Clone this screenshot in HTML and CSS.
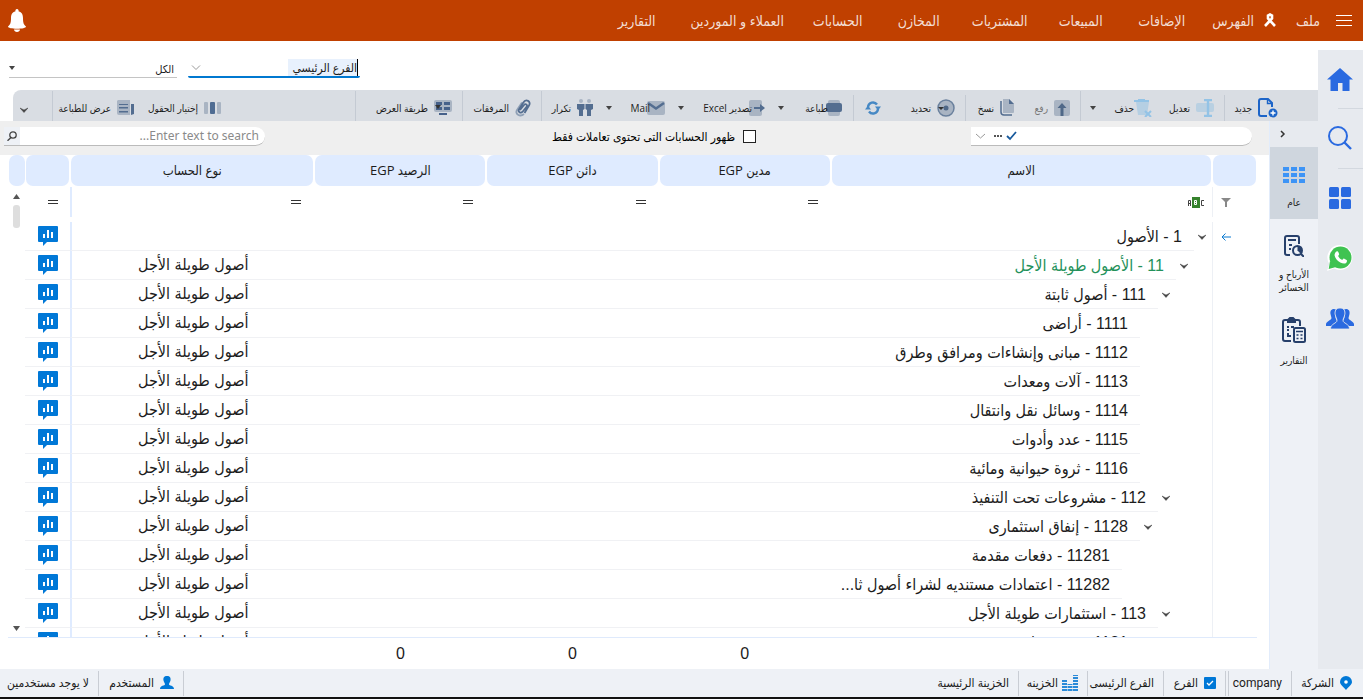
FILE: index.html
```html
<!DOCTYPE html>
<html lang="ar" dir="rtl">
<head>
<meta charset="utf-8">
<meta name="viewport" content="width=device-width, initial-scale=1">
<title>دليل الحسابات</title>
<link rel="stylesheet" href="styles.css">
</head>
<body>
<svg class="defs" aria-hidden="true">
  <symbol id="chart" viewBox="0 0 20 20"><path fill="#0078d7" d="M1 0h18a1 1 0 0 1 1 1v14a1 1 0 0 1-1 1H9l-4 4v-4H1a1 1 0 0 1-1-1V1a1 1 0 0 1 1-1z"/><path fill="#fff" d="M5 8h2v4H5zM9 4h2v8H9zM13 6h2v6h-2z"/></symbol>
  <symbol id="down" viewBox="0 0 8 6"><path d="M0 1l4 2 4-2-4 4.500z" fill="#444" stroke="#444" stroke-width=".5"/></symbol>
  <symbol id="tri" viewBox="0 0 6 4"><path fill="#444" d="M0 0h6L3 4z"/></symbol>
  <symbol id="eq" viewBox="0 0 10 4"><path fill="#333" d="M0 0h10v1H0zM0 3h10v1H0z"/></symbol>
  <symbol id="thin" viewBox="0 0 10 6"><path d="M1 .5l4 4 4-4" fill="none" stroke="#999"/></symbol>
</svg>

<header class="top">
  <nav class="menu">
    <button class="burger" aria-label="القائمة"><svg width="16" height="12"><path fill="#fff" d="M0 0h16v1H0zM0 5h16v1H0zM0 10h16v1H0z"/></svg></button>
    <a class="file" href="#">ملف</a>
    <a class="index" href="#"><svg width="12" height="15" viewBox="0 0 12 15"><path d="M1 13L8 5.500V2.500L6 1.500 4 2.500v3L11 13" fill="none" stroke="#fff" stroke-width="2.600"/></svg>الفهرس</a>
    <a href="#">الإضافات</a>
    <a href="#">المبيعات</a>
    <a href="#">المشتريات</a>
    <a href="#">المخازن</a>
    <a href="#">الحسابات</a>
    <a class="wide" href="#">العملاء و الموردين</a>
    <a href="#">التقارير</a>
  </nav>
  <button class="bell" aria-label="التنبيهات"><svg width="18" height="24" viewBox="0 0 18 24"><path fill="#fff" d="M9 0a1.600 1.600 0 0 1 1.500 2.200C14 3 15 6 15 9c0 5 .7 6.500 3 8.500 0 1.500-4 2.200-9 2.200S0 19 0 17.500C2.300 15.500 3 14 3 9c0-3 1-6 4.500-6.800A1.600 1.600 0 0 1 9 0zM6 20.500h6c0 1.500-1.500 2.500-3 2.500s-3-1-3-2.500z"/></svg></button>
</header>

<div class="body">
  <aside class="rail">
    <a href="#" class="home" aria-label="الرئيسية"><svg width="26" height="23" viewBox="0 0 26 23"><path fill="#2a6ae0" d="M13 0l13 11.500h-3.500V23h-7v-8h-4.500v8h-7.500V11.500H0z"/></svg></a>
    <a href="#" class="ruled" aria-label="بحث"><svg width="24" height="24" viewBox="0 0 24 24" fill="none" stroke="#2a6ae0" stroke-width="2"><circle cx="10" cy="10" r="9"/><path d="M16 16l7 7" stroke-width="2.400"/></svg></a>
    <a href="#" class="ruled" aria-label="التطبيقات"><svg width="22" height="22" fill="#2a6ae0"><rect width="10" height="10" rx="1.500"/><rect x="12" width="10" height="10" rx="1.500"/><rect y="12" width="10" height="10" rx="1.500"/><rect x="12" y="12" width="10" height="10" rx="1.500"/></svg></a>
    <a href="#" aria-label="واتساب"><svg width="26" height="26" viewBox="0 0 26 26"><path fill="#fff" d="M13.500 0A12.500 12.500 0 1 1 7 23.500L0 26l2.300-7A12.500 12.500 0 0 1 13.500 0z"/><circle cx="13.500" cy="12.500" r="11" fill="#3fc351"/><path fill="#3fc351" d="M3 16l-1.300 8 7.300-2z"/><path fill="#fff" d="M9.500 6.500c.8-.6 1.500-.3 1.900.8l.7 1.700c.2.800-.3 1.200-1 2 1 2 2.300 3.200 4.200 4 .8-1 1.200-1.600 2-1.300l2.300 1.200c.8.500.4 2-.3 2.800-1.300 1.300-3.600 1-6-.3-3.300-1.800-5.300-4.700-5.700-7-.2-1.600.8-3.200 1.900-3.900z"/></svg></a>
    <a href="#" aria-label="المستخدمون"><svg width="28" height="21" viewBox="0 0 28 21"><path fill="#2a6ae0" d="M8 1c-3 0-4 2.500-3.500 5l1 4c0 2-5 3.500-5.500 6v2h6c.7-3 5-3 5-5C9 10 8 4 10 1.500zM20 1c3 0 4 2.500 3.500 5l-1 4c0 2 5 3.500 5.500 6v2h-6c-.7-3-5-3-5-5 2-3 3-9 1-11.500z"/><path fill="#2a6ae0" stroke="#e7eaef" stroke-width=".8" d="M14 0c4 0 5.500 3 4.800 6.500-.4 2.500-1.800 4-1.800 6 0 3 6.500 3 6.500 8.500h-19c0-5.500 6.500-5.500 6.500-8.500 0-2-1.400-3.500-1.800-6C8.500 3 10 0 14 0z"/></svg></a>
  </aside>

  <div class="work">
    <div class="filters">
      <label class="pick branch"><input type="text" value="الفرع الرئيسي" aria-label="الفرع"><svg width="10" height="6"><use href="#thin"/></svg></label>
      <label class="pick all"><input type="text" value="الكل" aria-label="النطاق"><svg width="6" height="4"><use href="#tri"/></svg></label>
    </div>

    <div class="tools">
      <button class="t-new"><svg width="20" height="20" viewBox="0 0 20 20" fill="none" stroke="#1c64c8" stroke-width="2"><path d="M9 18H3a2 2 0 0 1-2-2V3a2 2 0 0 1 2-2h7l4 4v4"/><path d="M9.500 1v4.500H14" stroke-width="1.400"/><circle cx="15" cy="15" r="4.500" fill="#1c64c8" stroke="none"/><path d="M15 12.500v5M12.500 15h5" stroke="#fff" stroke-width="1.400"/></svg>جديد</button>
      <i class="bar low"></i>
      <button class="t-edit"><svg width="18" height="18" viewBox="0 0 18 18"><rect y="4" width="18" height="9" rx="2" fill="#b9d0e2"/><path d="M8 1h8M8 17h8M12 1v16" stroke="#93c3e6" stroke-width="2.400"/></svg>تعديل</button>
      <button class="t-del"><svg width="18" height="18" viewBox="0 0 18 18"><path fill="#b5cfe3" d="M2 3h13l-2 13H4z"/><path d="M0 2h15M4 1h7" stroke="#93c3e6" stroke-width="2"/><path d="M11 12l6 6M17 12l-6 6" stroke="#93c3e6" stroke-width="2"/></svg>حذف</button>
      <button class="drop" aria-label="خيارات الحذف"><svg width="6" height="4"><use href="#tri"/></svg></button>
      <i class="bar"></i>
      <button class="t-up" disabled><svg width="16" height="16" viewBox="0 0 16 16"><rect width="16" height="16" rx="2" fill="#a9b4c3"/><path fill="#4f6888" d="M8 3l4.500 5H9.500v8h-3V8h-3z"/></svg>رفع</button>
      <button class="t-copy"><svg width="14" height="17" viewBox="0 0 14 17"><path fill="#a9b4c3" d="M3 0h6l5 5v8a1 1 0 0 1-1 1H3z"/><path fill="#536d90" d="M9 0l5 5H9z"/><path d="M1 2v11a3 3 0 0 0 3 3h8" fill="none" stroke="#536d90" stroke-width="1.500"/></svg>نسخ</button>
      <i class="bar low"></i>
      <button class="t-pick"><svg width="18" height="18" viewBox="0 0 18 18"><circle cx="9" cy="9" r="8" fill="#a9b4c3" stroke="#6a809d" stroke-width="1.500"/><circle cx="9" cy="9" r="2.500" fill="#4f6888"/><path fill="#333" d="M1 8h6L4 11z"/></svg>تحديد</button>
      <button class="t-refresh" aria-label="تحديث"><svg width="16" height="14" viewBox="0 0 16 14"><path d="M3 6a5 5 0 0 1 9-2.500M13 8a5 5 0 0 1-9 2.500" fill="none" stroke="#4688c4" stroke-width="2.400"/><path fill="#4688c4" d="M10 5.500h6l-3 4zM6 8.500H0l3-4z"/></svg></button>
      <i class="bar low"></i>
      <button class="t-print"><svg width="18" height="16" viewBox="0 0 18 16"><rect x="3" width="12" height="16" rx="2" fill="#a9b4c3"/><rect x="1" y="3" width="16" height="9" rx="2" fill="#536d90"/></svg>طباعة</button>
      <button class="drop" aria-label="خيارات الطباعة"><svg width="6" height="4"><use href="#tri"/></svg></button>
      <button class="t-excel"><svg width="16" height="16" viewBox="0 0 16 16"><rect width="13" height="16" rx="2" fill="#a9b4c3"/><path fill="#536d90" d="M5 7h6V4l5 4-5 4V9H5z"/></svg>تصدير Excel</button>
      <button class="drop" aria-label="خيارات التصدير"><svg width="6" height="4"><use href="#tri"/></svg></button>
      <button class="t-mail"><svg width="18" height="14" viewBox="0 0 18 14"><rect width="18" height="14" rx="2" fill="#a9b4c3"/><path d="M1 2l8 5.500L17 2" fill="none" stroke="#536d90" stroke-width="2.500"/></svg>Mail</button>
      <button class="drop" aria-label="خيارات البريد"><svg width="6" height="4"><use href="#tri"/></svg></button>
      <button class="t-dup"><svg width="16" height="17" viewBox="0 0 16 17"><circle cx="4" cy="2" r="2" fill="#a9b4c3"/><circle cx="12" cy="2" r="2" fill="#a9b4c3"/><path fill="#536d90" d="M0 5h7.500v5L6 11v6H2v-6l-2-1zM8.500 5H16v5l-2 1v6h-4v-6l-1.500-1z"/></svg>تكرار</button>
      <i class="bar"></i>
      <button class="t-att"><svg width="16" height="18" viewBox="0 0 16 18" fill="none" stroke-width="1.800"><path d="M9 15c-4 3.500-9.500 0-7-4l5-7.500" stroke="#8fa0b6"/><path d="M5 11l4-5c1.500-2 4 0 2.600 1.700l-4 5c-2 2-5 0-3.500-2.500L8 4c3-5 8.500-1.500 6 2.500L9.500 14" stroke="#536d90"/></svg>المرفقات</button>
      <i class="bar"></i>
      <button class="t-view"><svg width="18" height="15" viewBox="0 0 18 15"><rect width="18" height="12" rx="2" fill="#a9b4c3"/><path fill="#46618a" d="M2 2h6v3H2zM10 2h6v3h-6zM2 7h6v3H2zM10 7h6v3h-6zM5 13h8v2H5z"/><path fill="#333" d="M1 5h6L4 9z"/></svg>طريقة العرض</button>
      <i class="bar"></i>
      <span class="grow"></span>
      <button class="t-cols"><svg width="18" height="12" viewBox="0 0 18 12"><rect width="4" height="12" rx="1" fill="#a9b4c3"/><rect x="6" width="5" height="12" rx="1" fill="#4f6c93"/><rect x="13" width="4" height="12" rx="1" fill="#a9b4c3"/></svg>إختيار الحقول</button>
      <button class="t-pv"><svg width="17" height="15" viewBox="0 0 17 15"><path fill="#a9b4c3" d="M1 0h12v15H2a2 2 0 0 1-2-2V1z"/><path fill="#536d90" d="M2 4h9v1H2zM2 7h9v1.500H2zM2 11h9v1.500H2zM14 4h3v10l-3 1z"/></svg>عرض للطباعة</button>
      <i class="bar"></i>
      <button class="t-more" aria-label="المزيد"><svg width="8" height="6"><use href="#down"/></svg></button>
    </div>

    <div class="split">
      <aside class="side">
        <button class="fold" aria-label="طي"><svg width="6" height="8"><path d="M1 1l3 3-3 3" fill="none" stroke="#333" stroke-width="1.500"/></svg></button>
        <a class="on" href="#"><svg width="22" height="16" viewBox="0 0 22 16" fill="#3d94f6"><path d="M0 0h6v4H0zM8 0h6v4H8zM16 0h6v4h-6zM0 6h6v4H0zM8 6h6v4H8zM16 6h6v4h-6zM0 12h6v4H0zM8 12h6v4H8zM16 12h6v4h-6z"/></svg>عام</a>
        <a href="#"><svg width="20" height="22" viewBox="0 0 20 22" fill="none" stroke="#27406b" stroke-width="2"><path d="M6 20H3a2 2 0 0 1-2-2V3a2 2 0 0 1 2-2h10a2 2 0 0 1 2 2v6M4 5h8M5 10h3M5 14h2M17 19l3 3"/><circle cx="13.500" cy="15.500" r="4.500"/><path fill="#27406b" stroke="none" d="M13.500 15.500V11a4.500 4.500 0 0 1 4.500 4.500 4.500 4.500 0 0 1-1.500 3z"/></svg>الأرباح و الخسائر</a>
        <a href="#"><svg width="24" height="26" viewBox="0 0 24 26" fill="none" stroke="#27406b" stroke-width="2"><path d="M9 24H3a2 2 0 0 1-2-2V5a2 2 0 0 1 2-2h13a2 2 0 0 1 2 2v4"/><path d="M6 5V3l2-2h3l2 2v2z"/><path d="M5 10h2M9 10h3M5 13h2M6 16v3h3"/><rect x="12" y="11" width="11" height="14" rx="1.500"/><path d="M14 14.500h7M14.500 18h2M18.500 18h2M14.500 21.500h2M18.500 21.500h2" stroke-width="1.600"/></svg>التقارير</a>
      </aside>

      <main class="pane">
        <div class="seek">
          <div class="combo"><input type="text" aria-label="الحساب"><svg width="42" height="10" viewBox="0 0 42 10"><path d="M32 5l3 3 6-7" fill="none" stroke="#17599c" stroke-width="1.800"/><path fill="#555" d="M19 4h2v2h-2zM22 4h2v2h-2zM25 4h2v2h-2z"/><path d="M1 3l4.500 4L10 3" fill="none" stroke="#999"/></svg></div>
          <label class="tick"><input type="checkbox">ظهور الحسابات التى تحتوى تعاملات فقط</label>
          <div class="find"><input type="search" placeholder="Enter text to search..." aria-label="بحث"><button aria-label="ابحث"><svg width="10" height="10" viewBox="0 0 10 10" fill="none" stroke="#444" stroke-width="1.300"><circle cx="6" cy="4" r="3.200"/><path d="M4 6.500L.5 9.800"/></svg></button></div>
        </div>

        <div class="grid">
          <table class="accounts">
            <colgroup><col class="c-mark"><col class="c-name"><col class="c-num"><col class="c-num"><col class="c-num"><col class="c-type"><col class="c-mark"></colgroup>
            <thead>
              <tr class="heads"><th><span></span></th><th><span>الاسم</span></th><th><span>مدين EGP</span></th><th><span>دائن EGP</span></th><th><span>الرصيد EGP</span></th><th><span>نوع الحساب</span></th><th><span></span></th></tr>
              <tr class="ops">
                <td class="mark"><svg width="10" height="9"><path fill="#888" d="M0 0h10L6 4v5H4V4z"/></svg></td>
                <td><svg width="16" height="11" viewBox="0 0 16 11" fill="none" stroke="#444"><path d="M.5 9V3.500h2V9M.5 6.500h2M16 3.500h-2.500v5H16"/><rect x="4" width="8" height="11" fill="#35822c" stroke="none"/><path d="M6.500 3.500h2v2h-2zM6.500 5.500h2v2h-2z" stroke="#fff"/></svg></td>
                <td><svg width="10" height="4"><use href="#eq"/></svg></td><td><svg width="10" height="4"><use href="#eq"/></svg></td><td><svg width="10" height="4"><use href="#eq"/></svg></td><td class="kind"><svg width="10" height="4"><use href="#eq"/></svg></td>
                <td class="flag"><svg width="10" height="4"><use href="#eq"/></svg></td>
              </tr>
            </thead>
            <tbody>
              <tr><td class="mark"><svg width="10" height="8"><path d="M10 4H1M4.500.5L1 4l3.500 3.500" fill="none" stroke="#0a7ad1"/></svg></td><td><div class="node l0"><svg width="8" height="6"><use href="#down"/></svg><span>1 - الأصول</span></div></td><td></td><td></td><td></td><td class="kind"></td><td class="flag"><svg width="20" height="20"><use href="#chart"/></svg></td></tr>
              <tr class="green"><td class="mark"></td><td><div class="node l1"><svg width="8" height="6"><use href="#down"/></svg><span>11 - الأصول طويلة الأجل</span></div></td><td></td><td></td><td></td><td class="kind">أصول طويلة الأجل</td><td class="flag"><svg width="20" height="20"><use href="#chart"/></svg></td></tr>
              <tr><td class="mark"></td><td><div class="node l2"><svg width="8" height="6"><use href="#down"/></svg><span>111 - أصول ثابتة</span></div></td><td></td><td></td><td></td><td class="kind">أصول طويلة الأجل</td><td class="flag"><svg width="20" height="20"><use href="#chart"/></svg></td></tr>
              <tr><td class="mark"></td><td><div class="node l3 leaf"><span>1111 - أراضى</span></div></td><td></td><td></td><td></td><td class="kind">أصول طويلة الأجل</td><td class="flag"><svg width="20" height="20"><use href="#chart"/></svg></td></tr>
              <tr><td class="mark"></td><td><div class="node l3 leaf"><span>1112 - مبانى وإنشاءات ومرافق وطرق</span></div></td><td></td><td></td><td></td><td class="kind">أصول طويلة الأجل</td><td class="flag"><svg width="20" height="20"><use href="#chart"/></svg></td></tr>
              <tr><td class="mark"></td><td><div class="node l3 leaf"><span>1113 - آلات ومعدات</span></div></td><td></td><td></td><td></td><td class="kind">أصول طويلة الأجل</td><td class="flag"><svg width="20" height="20"><use href="#chart"/></svg></td></tr>
              <tr><td class="mark"></td><td><div class="node l3 leaf"><span>1114 - وسائل نقل وانتقال</span></div></td><td></td><td></td><td></td><td class="kind">أصول طويلة الأجل</td><td class="flag"><svg width="20" height="20"><use href="#chart"/></svg></td></tr>
              <tr><td class="mark"></td><td><div class="node l3 leaf"><span>1115 - عدد وأدوات</span></div></td><td></td><td></td><td></td><td class="kind">أصول طويلة الأجل</td><td class="flag"><svg width="20" height="20"><use href="#chart"/></svg></td></tr>
              <tr><td class="mark"></td><td><div class="node l3 leaf"><span>1116 - ثروة حيوانية ومائية</span></div></td><td></td><td></td><td></td><td class="kind">أصول طويلة الأجل</td><td class="flag"><svg width="20" height="20"><use href="#chart"/></svg></td></tr>
              <tr><td class="mark"></td><td><div class="node l2"><svg width="8" height="6"><use href="#down"/></svg><span>112 - مشروعات تحت التنفيذ</span></div></td><td></td><td></td><td></td><td class="kind">أصول طويلة الأجل</td><td class="flag"><svg width="20" height="20"><use href="#chart"/></svg></td></tr>
              <tr><td class="mark"></td><td><div class="node l3"><svg width="8" height="6"><use href="#down"/></svg><span>1128 - إنفاق استثمارى</span></div></td><td></td><td></td><td></td><td class="kind">أصول طويلة الأجل</td><td class="flag"><svg width="20" height="20"><use href="#chart"/></svg></td></tr>
              <tr><td class="mark"></td><td><div class="node l4 leaf"><span>11281 - دفعات مقدمة</span></div></td><td></td><td></td><td></td><td class="kind">أصول طويلة الأجل</td><td class="flag"><svg width="20" height="20"><use href="#chart"/></svg></td></tr>
              <tr><td class="mark"></td><td><div class="node l4 leaf"><span>11282 - اعتمادات مستنديه لشراء أصول ثا...</span></div></td><td></td><td></td><td></td><td class="kind">أصول طويلة الأجل</td><td class="flag"><svg width="20" height="20"><use href="#chart"/></svg></td></tr>
              <tr><td class="mark"></td><td><div class="node l2"><svg width="8" height="6"><use href="#down"/></svg><span>113 - استثمارات طويلة الأجل</span></div></td><td></td><td></td><td></td><td class="kind">أصول طويلة الأجل</td><td class="flag"><svg width="20" height="20"><use href="#chart"/></svg></td></tr>
              <tr><td class="mark"></td><td><div class="node l3 leaf"><span>1131 - مشروعات</span></div></td><td></td><td></td><td></td><td class="kind">أصول طويلة الأجل</td><td class="flag"><svg width="20" height="20"><use href="#chart"/></svg></td></tr>
            </tbody>
          </table>
          <div class="scroll">
            <span class="stub"></span>
            <svg width="7" height="5"><path fill="#555" d="M0 5h7L3.500 0z"/></svg>
            <span class="thumb"></span>
            <svg class="end" width="7" height="5"><path fill="#555" d="M0 0h7L3.500 5z"/></svg>
          </div>
        </div>

        <table class="accounts sums">
          <colgroup><col class="c-mark"><col class="c-name"><col class="c-num"><col class="c-num"><col class="c-num"><col class="c-type"><col class="c-mark"></colgroup>
          <tbody><tr><td></td><td></td><td>0</td><td>0</td><td>0</td><td></td><td></td></tr></tbody>
        </table>
      </main>
    </div>
  </div>
</div>

<footer class="status">
  <span class="s-co"><svg width="12" height="14" viewBox="0 0 12 14"><path fill="#0078d7" d="M6 0a6 6 0 0 1 6 6c0 3-4 5-6 8-2-3-6-5-6-8a6 6 0 0 1 6-6z"/><circle cx="6" cy="6" r="1.800" fill="#fff"/></svg>الشركة</span>
  <span class="s-conm">company</span>
  <label class="s-br"><input type="checkbox" checked>الفرع</label>
  <span class="s-brnm">الفرع الرئيسى</span>
  <span class="s-safe"><svg width="16" height="16" viewBox="0 0 16 16" fill="none" stroke="#2a8ad8" stroke-dasharray="2 1"><path d="M2.500 16V4M8 16V9M13.500 16V0" stroke-width="5"/></svg>الخزينه</span>
  <span class="s-safenm">الخزينة الرئيسية</span>
  <span class="grow"></span>
  <span class="s-user"><svg width="14" height="13" viewBox="0 0 14 13"><path fill="#0078d7" d="M7 0c3 0 4 2 3.500 4.500C10 6.500 9 7 9 8.500c0 1 5 1 5 4.500H0c0-3.500 5-3.500 5-4.500C5 7 4 6.500 3.500 4.500 3 2 4 0 7 0z"/></svg>المستخدم</span>
  <span class="s-none">لا يوجد مستخدمين</span>
</footer>
</body>
</html>
```
FILE: styles.css
```css
* { box-sizing: border-box; }
body {
  margin: 0;
  height: 100vh;
  display: flex;
  flex-direction: column;
  background: #fff;
  color: #1c1c1c;
  font: 11px/14px "Open Sans", "DejaVu Sans Condensed", "DejaVu Sans", sans-serif;
}
a { color: inherit; text-decoration: none; }
button { border: 0; padding: 0; background: none; font: inherit; color: inherit; }
input { border: 0; padding: 0; margin: 0; background: none; font: inherit; color: inherit; min-width: 0; outline: 0; }
svg { display: block; flex: none; }
.defs { position: absolute; width: 0; height: 0; }
.grow { flex: 1; }

/* top menu */
.top { flex: none; height: 41px; background: #c04000; color: #f3ded4; display: flex; align-items: center; justify-content: space-between; padding: 0 11px 0 8px; }
.menu { display: flex; align-items: center; font-size: 14px; line-height: 20px; white-space: nowrap; }
.menu a { width: 81px; text-align: center; }
.menu .file { width: auto; margin-right: 16px; }
.menu .index { width: auto; margin: 0 20px 0 10px; display: flex; align-items: center; gap: 10px; }
.menu .wide { width: 120px; }

.body { flex: 1; min-height: 0; display: flex; }

/* right icon rail */
.rail { flex: none; width: 45px; margin-top: 9px; background: #e7eaef; display: flex; flex-direction: column; }
.rail a { height: 60px; display: flex; align-items: center; justify-content: center; padding-right: 2px; }
.rail .home { height: 58px; }
.rail .ruled { background: linear-gradient(#d3d8df, #d3d8df) right top / 25px 1px no-repeat; }

.work { flex: 1; min-width: 0; display: flex; flex-direction: column; }

/* pickers above the toolbar */
.filters { flex: none; height: 49px; padding-left: 9px; display: flex; justify-content: flex-end; align-items: flex-end; padding-bottom: 12px; gap: 11px; }
.pick { display: flex; align-items: center; height: 19px; font-size: 11px; }
.pick input { flex: 1; height: 17px; }
.branch { width: 172px; border-bottom: 2px solid #0078d0; border-radius: 2px; padding: 0 2px 0 3px; }
.branch input { flex: none; width: 70px; height: 17px; font-size: 12px; background: #e8f1fd; border-right: 1px solid #000; margin-left: auto; }
.all { width: 168px; border-bottom: 1px solid #c4c4c4; padding: 0 3px 0 0; }

/* toolbar */
.tools { flex: none; height: 31px; margin-left: 13px; padding-right: 30px; background: #d9dde3; border-radius: 8px 0 0 0; display: flex; align-items: stretch; white-space: nowrap; font-size: 10px; }
.tools button { display: flex; align-items: center; gap: 6px; padding: 4px 10px 0 0; }
.tools button:disabled { color: #777; }
.bar { width: 1px; margin-top: 1px; background: #c4cad3; }
.bar.low { margin-top: 5px; }
.tools .drop { width: 24px; padding: 4px 0 0; justify-content: center; }
.t-new { width: 63px; }
.t-edit { width: 62px; }
.tools .t-del { width: 57px; gap: 0; }
.t-up { width: 56px; }
.t-copy { width: 58px; }
.t-pick { width: 74px; }
.tools .t-refresh { width: 37px; }
.tools .t-print { width: 60px; gap: 0; }
.tools .t-excel { width: 76px; gap: 0; padding-right: 4px; }
.tools .t-mail { width: 48px; gap: 0; padding-right: 4px; }
.t-print svg, .t-excel svg, .t-mail svg { margin-left: -3px; }
.tools .t-dup { width: 55px; padding-right: 4px; }
.t-att { width: 78px; }
.t-view { width: 106px; }
.t-cols { width: 88px; }
.t-pv { width: 91px; }
.tools .t-more { width: 39px; padding: 8px 18px 0 0; justify-content: center; }

.split { flex: 1; min-height: 0; display: flex; }

/* module sidebar */
.side { flex: none; width: 49px; background: #eef1f6; display: flex; flex-direction: column; border-left: 1px solid #e2ecfb; }
.side .fold { height: 26px; display: flex; align-items: center; justify-content: flex-start; padding-right: 32px; background: #e7eaef; }
.side a { display: flex; flex-direction: column; align-items: center; text-align: center; gap: 11px; padding: 16px 0 7px; font-size: 10px; line-height: 13px; }
.side a.on { height: 72px; padding-top: 20px; background: #cfd6de; gap: 13px; }

/* search strip */
.pane { flex: 1; min-width: 0; display: flex; flex-direction: column; }
.seek { flex: none; height: 34px; background: #efefef; display: flex; justify-content: space-between; align-items: flex-start; padding: 6px 17px 0 4px; }
.combo { width: 281px; height: 19px; background: #fff; border-bottom: 1px solid #bbb; border-radius: 0 10px 10px 0; display: flex; align-items: center; padding-left: 4px; }
.combo input { flex: 1; }
.tick { display: flex; align-items: center; gap: 8px; height: 19px; font-size: 12px; color: #000; margin-left: 72px; }
.tick input { appearance: none; width: 13px; height: 13px; border: 1px solid #222; background: #fff; }
.find { width: 261px; height: 19px; display: flex; background: #fff; border-bottom: 1px solid #bbb; border-radius: 0 10px 10px 0; padding-right: 6px; }
.find input { flex: 1; font: 12px/16px "Noto Sans", sans-serif; }
.find input::placeholder { color: #8a8a8a; opacity: 1; }
.find button { width: 16px; background: #eef1f6; display: flex; align-items: center; justify-content: center; }

/* accounts tree */
.grid { flex: 1; min-height: 0; overflow: hidden; display: flex; margin: 0 12px 0 8px; border-bottom: 1px solid #dfeafc; }
.accounts { flex: 1; min-width: 0; width: 100%; height: max-content; table-layout: fixed; border-collapse: separate; border-spacing: 0; }
.accounts td, .accounts th { padding: 0; font-weight: normal; }
.c-mark { width: 45px; }
.c-name { width: 381px; }
.c-num { width: 172px; }
.c-type { width: 244px; }
.heads th { padding: 0 1px; height: 32px; font-size: 13px; vertical-align: top; }
.heads span, .stub { display: block; height: 31px; line-height: 31px; background: #dfebff; border-radius: 7px; }
.ops td { height: 30px; padding-right: 13px; }
.ops td:nth-child(2) { padding-right: 8px; }
.accounts .mark { padding: 0 26px 0 0; border-left: 1px solid #edf0f5; }
.accounts .kind { border-left: 2px solid #dfebff; }
.accounts .flag { padding-right: 12px; }
.accounts tbody td { height: 29px; border-bottom: 1px solid #f0f1f4; font: 16px/20px "Liberation Sans", "DejaVu Sans Condensed", "DejaVu Sans", sans-serif; }
.accounts tbody::before { content: ""; display: table-row; height: 5px; }
.accounts tbody .mark, .accounts tbody td:nth-child(2) { border-bottom: 0; }
.accounts tbody .kind { text-align: center; }
.node { display: flex; align-items: center; height: 29px; white-space: nowrap; }
.node svg { margin: 0 6px 0 4px; }
.node span { flex: 1; min-width: 0; overflow: hidden; text-overflow: ellipsis; height: 29px; line-height: 29px; padding-right: 12px; border-bottom: 1px solid #f0f1f4; }
.leaf { margin-right: 18px; }
.l1 { padding-right: 18px; }
.l2 { padding-right: 36px; }
.l3 { padding-right: 54px; }
.l4 { padding-right: 72px; }
.green span { color: #23915a; }

.scroll { flex: none; width: 17px; display: flex; flex-direction: column; align-items: center; }
.stub { width: 16px; margin-bottom: 8px; }
.thumb { width: 7px; height: 23px; margin-top: 6px; border-radius: 3px; background: #dedede; }
.end { margin: auto 0 6px; }

.sums { flex: none; width: auto; margin: 0 12px 0 25px; }
.accounts.sums tbody::before { display: none; }
.accounts.sums tbody td { height: 31px; border: 0; text-align: center; }

/* status bar */
.status { flex: none; height: 30px; background: #eef1f6; border-bottom: 2px solid #111; display: flex; align-items: stretch; white-space: nowrap; font-size: 12px; padding: 2px 0 1px; }
.status > :not(.grow) { display: flex; align-items: center; gap: 6px; padding: 0 9px 2px 0; border-left: 1px solid #c9cdd4; }
.status .s-co { width: 72px; padding-right: 11px; }
.status .s-conm { width: 63px; font-size: 12px; font-family: Roboto, sans-serif; }
.status .s-br { width: 63px; border-right: 1px solid #c9cdd4; margin-right: 2px; }
.status .s-brnm { width: 76px; }
.s-br input { appearance: none; width: 12px; height: 12px; background: #0078d7 url("data:image/svg+xml,%3Csvg xmlns='http://www.w3.org/2000/svg' viewBox='0 0 12 12'%3E%3Cpath d='M3 6l2 2 4-4' fill='none' stroke='white' stroke-width='1.300'/%3E%3C/svg%3E"); border-radius: 1px; }
.status .s-safe { width: 69px; gap: 4px; }
.status .s-safenm { border: 0; }
.status .s-user { width: 86px; border-right: 1px solid #c9cdd4; }
.status .s-none { width: 98px; border: 0; }
```
